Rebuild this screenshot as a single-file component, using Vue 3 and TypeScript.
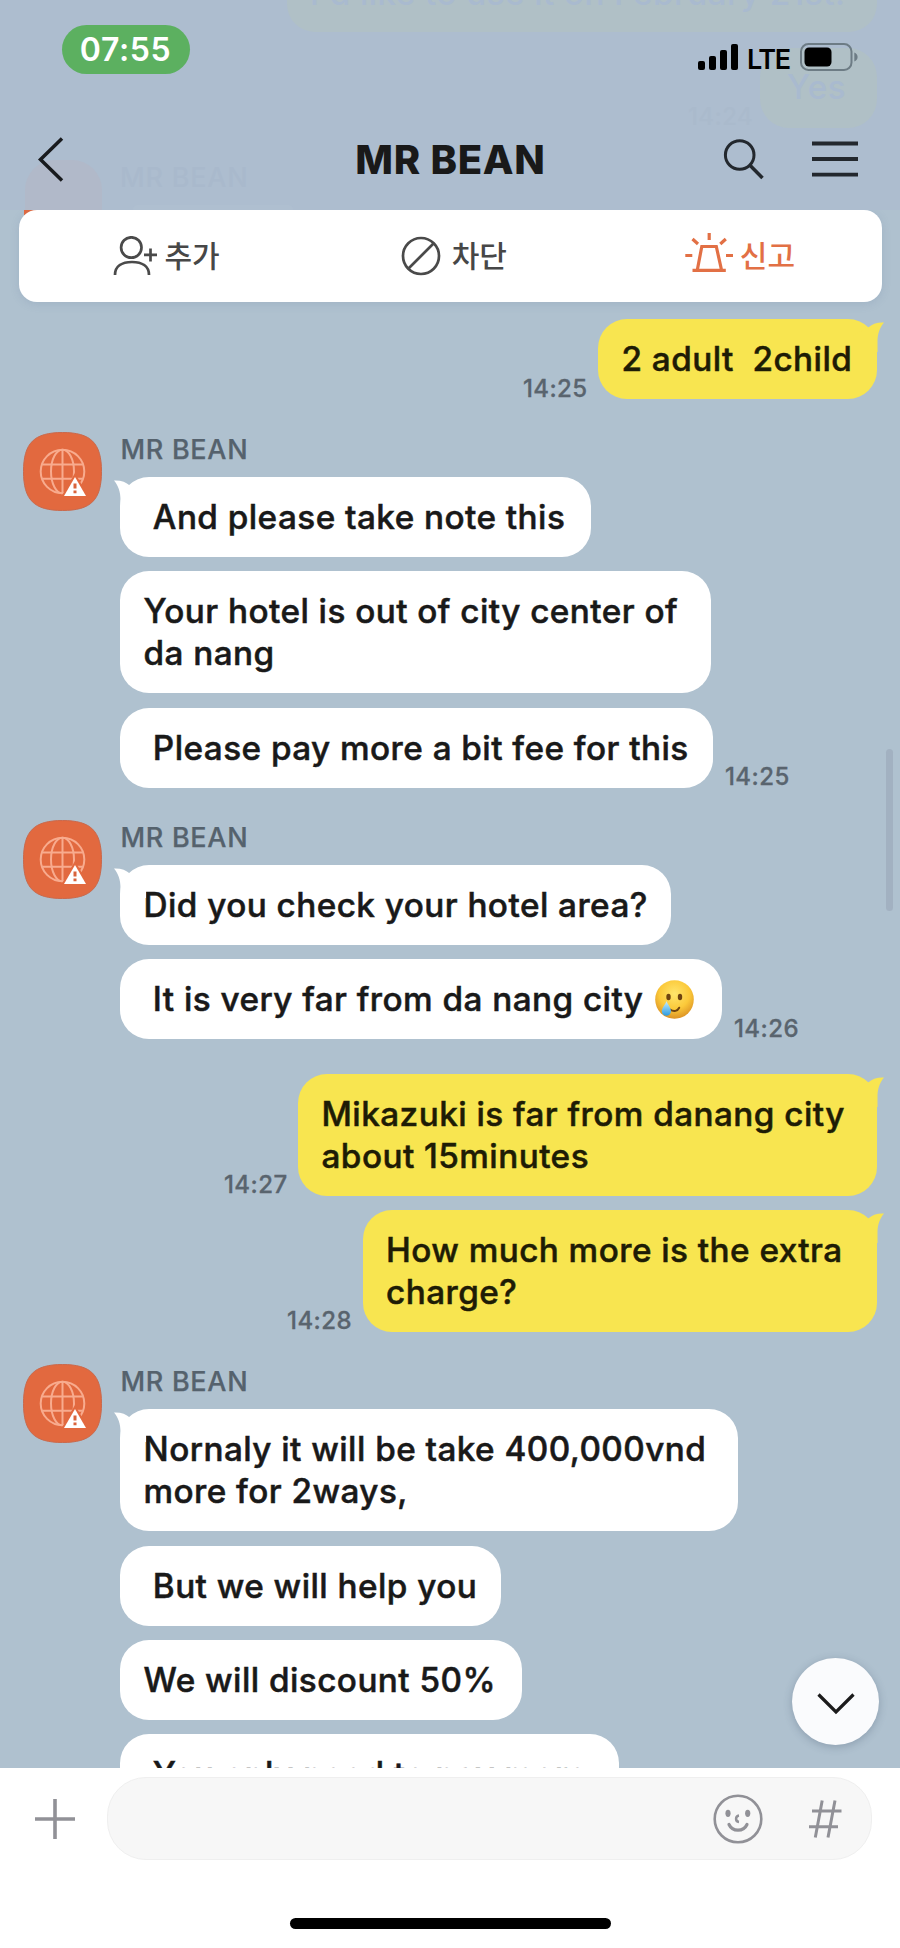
<script setup lang="ts">
interface Message {
  lines: string[]
  width: number
  tail?: boolean
  time?: string
  emoji?: boolean
}
interface Group {
  id: number
  mine: boolean
  gapBefore: number
  messages: Message[]
}

const contact = 'MR BEAN'

const groups: Group[] = [
  {
    id: 1,
    mine: true,
    gapBefore: 17,
    messages: [{ lines: ['2 adult  2child'], width: 279, tail: true, time: '14:25' }],
  },
  {
    id: 2,
    mine: false,
    gapBefore: 33,
    messages: [
      { lines: [' And please take note this'], width: 471, tail: true },
      { lines: ['Your hotel is out of city center of', 'da nang'], width: 590.5 },
      { lines: [' Please pay more a bit fee for this'], width: 593, time: '14:25' },
    ],
  },
  {
    id: 3,
    mine: false,
    gapBefore: 32.4,
    messages: [
      { lines: ['Did you check your hotel area?'], width: 551, tail: true },
      { lines: [' It is very far from da nang city'], width: 602, time: '14:26', emoji: true },
    ],
  },
  {
    id: 4,
    mine: true,
    gapBefore: 34.4,
    messages: [
      { lines: ['Mikazuki is far from danang city', 'about 15minutes'], width: 579, tail: true, time: '14:27' },
      { lines: ['How much more is the extra', 'charge?'], width: 514.5, tail: true, time: '14:28' },
    ],
  },
  {
    id: 5,
    mine: false,
    gapBefore: 32.3,
    messages: [
      { lines: ['Nornaly it will be take 400,000vnd', 'more for 2ways,'], width: 618, tail: true },
      { lines: [' But we will help you'], width: 381 },
      { lines: ['We will discount 50%'], width: 401.5 },
      { lines: [' You only need to pay more'], width: 498.5 },
    ],
  },
]
</script>

<template>
  <div class="phone">
    <header class="top">
      <!-- Conversation showing faintly through the translucent bar -->
      <div class="ghosts" aria-hidden="true">
        <div class="ghost-bubble first"><span>I'd like to use it on February 21st.</span></div>
        <div class="ghost-bubble second"><span>Yes</span></div>
        <span class="ghost-time">14:24</span>
        <span class="ghost-avatar"></span>
        <span class="ghost-name">{{ contact }}</span>
        <span class="ghost-white"></span>
        <span class="avatar-edge"></span>
      </div>

      <div class="status">
        <span class="clock">07:55</span>
        <div class="signals">
          <svg class="bars" width="40" height="26" viewBox="0 0 40 26">
            <rect x="0" y="17" width="7" height="9" rx="2" />
            <rect x="11" y="12" width="7" height="14" rx="2" />
            <rect x="22" y="6" width="7" height="20" rx="2" />
            <rect x="33" y="0" width="7" height="26" rx="2" />
          </svg>
          <span class="lte">LTE</span>
          <svg width="58" height="28" viewBox="0 0 58 28">
            <rect x="1" y="1" width="50.5" height="26" rx="7.5" fill="none" stroke="#6d7c85" stroke-width="2" />
            <rect x="4.5" y="4.5" width="27" height="19" rx="4.5" fill="#000" />
            <path d="M54.3 9.5c2 .8 3.3 2.400 3.300 4.500s-1.300 3.700-3.300 4.500z" fill="#6d7c85" />
          </svg>
        </div>
      </div>

      <nav class="nav">
        <svg width="28" height="46" viewBox="0 0 28 46" class="back">
          <path d="M25 2.500 3.500 23.500 25 44.500" fill="none" stroke="#191b1e" stroke-width="3.500" />
        </svg>
        <h1 class="title">{{ contact }}</h1>
        <div class="nav-icons">
          <svg width="42" height="42" viewBox="0 0 42 42" fill="none" stroke="#23282e">
            <circle cx="16.700" cy="17" r="14.300" stroke-width="3" />
            <path d="M26.700 27 39.500 40" stroke-width="3.500" />
          </svg>
          <svg width="46" height="36" viewBox="0 0 46 36" fill="none" stroke="#23282e" stroke-width="3.800">
            <path d="M0 2.500h46M0 18h46M0 33.700h46" />
          </svg>
        </div>
      </nav>
    </header>

    <section class="actions">
      <button class="action add">
        <svg width="44" height="40" viewBox="0 0 44 40" fill="none" stroke="#4a4a4a" stroke-width="2.700">
          <circle cx="18.300" cy="11.500" r="10.200" />
          <path d="M2 39C2 30 9 26 19 26S36 30 36 39M31 18.800h13M37.500 12.500v13" />
        </svg>
        <span>추가</span>
      </button>
      <button class="action block">
        <svg width="40" height="40" viewBox="0 0 40 40" fill="none" stroke="#4a4a4a" stroke-width="2.700">
          <circle cx="20" cy="20" r="18" />
          <path d="M7.500 32.500 32.500 7.500" />
        </svg>
        <span>차단</span>
      </button>
      <button class="action report">
        <svg width="48" height="40" viewBox="0 0 48 40" fill="none" stroke="#e27045" stroke-width="3.200">
          <path d="M12.500 37 16.800 14.500H31.300L36.300 37M7.500 38.300H40.800" />
          <path d="M24.200 1v7M7.500 7l5.500 5M40.800 7l-5.500 5M.300 23.500h7M41 23.500h7" />
        </svg>
        <span>신고</span>
      </button>
    </section>

    <main class="chat">
      <div
        v-for="g in groups"
        :key="g.id"
        class="group"
        :class="{ mine: g.mine }"
        :style="{ marginTop: g.gapBefore + 'px' }"
      >
        <svg v-if="!g.mine" class="avatar" width="79" height="79" viewBox="0 0 79 79">
          <path
            d="M39.500.500C68 .500 78.500 11 78.500 39.500S68 78.500 39.500 78.500.500 68 .500 39.500 11 .500 39.500.500z"
            fill="#e2693f"
            stroke="#c9694c"
          />
          <g fill="none" stroke="#f8ab8e" stroke-width="2">
            <circle cx="39.500" cy="39.500" r="21.800" />
            <ellipse cx="39.500" cy="39.500" rx="11.500" ry="21.800" />
            <path d="M39.500 17.700v43.600M19.500 32.500h40M19.500 46.800h40" />
          </g>
          <path d="M52 45 63 64H41z" fill="#fff" stroke="#e2693f" stroke-width="4" paint-order="stroke" />
          <path d="M52 51.500v5M52 58.500v2.800" stroke="#d9633b" stroke-width="3" />
        </svg>

        <div class="stack">
          <div v-if="!g.mine" class="name">{{ contact }}</div>
          <div v-for="(m, i) in g.messages" :key="i" class="row">
            <div class="bubble" :style="{ width: m.width + 'px' }">
              <svg v-if="m.tail" class="tail" width="32" height="30" viewBox="0 0 32 30">
                <path d="M0 .500C7 .200 12 2 15.800 5.500L32 14V30H6.500V20C6.500 12 4.500 6 0 .500z" />
              </svg>
              <p v-for="line in m.lines" :key="line" class="line">{{ line }}<svg
                v-if="m.emoji"
                class="emoji"
                width="39"
                height="39"
                viewBox="0 0 39 39"
              >
                <defs>
                  <radialGradient id="face" cx=".5" cy=".35" r=".65">
                    <stop offset="0" stop-color="#ffe56c" />
                    <stop offset=".6" stop-color="#fbc93a" />
                    <stop offset="1" stop-color="#dc9225" />
                  </radialGradient>
                  <linearGradient id="tear" x1="0" y1="0" x2="0" y2="1">
                    <stop offset="0" stop-color="#c9efff" />
                    <stop offset="1" stop-color="#2a9ae0" />
                  </linearGradient>
                </defs>
                <circle cx="19.500" cy="19.500" r="19.300" fill="url(#face)" />
                <ellipse cx="13.500" cy="17" rx="2.200" ry="3.200" fill="#6e4310" />
                <ellipse cx="25" cy="17" rx="2.200" ry="3.200" fill="#6e4310" />
                <path d="M15 29.500c4 2.800 7.500 1.500 9.200-1.800" fill="none" stroke="#6e4310" stroke-width="2" stroke-linecap="round" />
                <path d="M11.500 21c1.500 4 4.500 6.800 4.500 10.200a4.600 4.600 0 0 1-9.200 0c0-3.400 3.400-6.200 4.700-10.200z" fill="url(#tear)" />
              </svg></p>
            </div>
            <time v-if="m.time" class="time">{{ m.time }}</time>
          </div>
        </div>
      </div>

      <div class="scrollbar"></div>
      <button class="jump" aria-label="Jump to latest">
        <svg width="40" height="24" viewBox="0 0 40 24">
          <path d="M2.500 2.500 20 20 37.500 2.500" fill="none" stroke="#1b1b1c" stroke-width="3.200" />
        </svg>
      </button>
    </main>

    <footer class="composer">
      <div class="entry">
        <svg class="plus" width="40" height="40" viewBox="0 0 40 40">
          <path d="M20 0v40M0 20h40" stroke="#919197" stroke-width="3.600" />
        </svg>
        <div class="field">
          <svg width="50" height="50" viewBox="0 0 50 50" fill="none" stroke="#919197">
            <circle cx="25" cy="25" r="23.300" stroke-width="2.600" />
            <g fill="#919197" stroke="none">
              <ellipse cx="15" cy="19.300" rx="2.600" ry="3.600" />
              <ellipse cx="34.700" cy="19.300" rx="2.600" ry="3.600" />
            </g>
            <path d="M26 21.500c-3.800.500-4 6 0 6.500" stroke-width="2.500" />
            <path d="M16 30.500c3.500 7.500 14.500 7.500 18 0" stroke-width="3.200" stroke-linecap="round" />
          </svg>
          <svg width="33" height="38" viewBox="0 0 33 38" fill="none" stroke="#919197" stroke-width="3">
            <path d="M13.200.500 6.300 37.500M26 .500 19 37.500M3 11h29.500M0 26.800h29" />
          </svg>
        </div>
      </div>
      <div class="home"></div>
    </footer>
  </div>
</template>

<style>
body {
  margin: 0;
}
</style>

<style scoped>
.phone {
  width: 900px;
  height: 1948px;
  display: flex;
  flex-direction: column;
  overflow: hidden;
  background: #afc1cf;
  color: #191919;
  font-family: Inter, "Noto Sans CJK KR", sans-serif;
}
h1,
p {
  margin: 0;
}
button {
  border: 0;
  padding: 0;
  background: none;
  font: inherit;
}
svg {
  flex: none;
  display: block;
}

/* Top bar */
.top {
  position: relative;
  height: 210px;
  flex: none;
  background: #adbdcf;
}
.ghosts {
  position: absolute;
  inset: 0;
  font-size: 33.300px;
  font-weight: 500;
  letter-spacing: 0.4px;
  color: #a9bacf;
}
.ghosts > * {
  position: absolute;
}
.ghost-bubble {
  background: #b0c0c6;
  white-space: nowrap;
}
.ghost-bubble.first {
  left: 287px;
  top: 0;
  width: 590px;
  height: 32px;
  border-radius: 0 0 28px 28px;
  overflow: hidden;
}
.ghost-bubble.first span {
  display: block;
  margin: -28px 0 0 23px;
  line-height: 42px;
}
.ghost-bubble.second {
  left: 760px;
  top: 48px;
  width: 117px;
  height: 80px;
  border-radius: 29px;
}
.ghost-bubble.second span {
  display: block;
  margin: 18px 0 0 27px;
  line-height: 42px;
}
.ghost-time {
  left: 688px;
  top: 102px;
  font-size: 24px;
  color: #aabacc;
}
.ghost-avatar {
  left: 25px;
  top: 160px;
  width: 77px;
  height: 50px;
  border-radius: 30px 30px 0 0;
  background: #b1b9c9;
}
.ghost-name {
  left: 120px;
  top: 161px;
  font-size: 27px;
  letter-spacing: 0.8px;
  color: #a9b9cc;
}
.ghost-white {
  left: 133px;
  top: 205px;
  width: 160px;
  height: 5px;
  border-radius: 20px 20px 0 0;
  background: #afbfd0;
}
.avatar-edge {
  left: 24px;
  top: 210px;
  width: 14px;
  height: 6px;
  background: #e2693f;
}
.status {
  position: relative;
  height: 49px;
  padding: 24.500px 42px 0 62px;
  display: flex;
  justify-content: space-between;
}
.clock {
  width: 128px;
  height: 49px;
  border-radius: 25px;
  background: #5cb060;
  color: #fff;
  font-size: 32px;
  font-weight: 600;
  line-height: 50px;
  text-align: center;
  text-indent: -1px;
  letter-spacing: 0.6px;
}
.signals {
  display: flex;
  align-items: flex-start;
  padding-top: 18.500px;
}
.bars {
  margin-top: 1px;
  fill: #000;
}
.lte {
  width: 62px;
  padding-left: 9px;
  box-sizing: border-box;
  color: #000;
  font-size: 27px;
  font-weight: 600;
  line-height: 33px;
  letter-spacing: -1.400px;
}
.nav {
  position: relative;
  margin-top: 44.500px;
  height: 81px;
  display: grid;
  grid-template-columns: 1fr auto 1fr;
  align-items: center;
  padding: 0 42px 0 37px;
}
.title {
  font-size: 40px;
  font-weight: 800;
  line-height: 48px;
  margin: 2px 0 0 6px;
  letter-spacing: 0.7px;
}
.nav-icons {
  display: flex;
  justify-content: flex-end;
  align-items: center;
  gap: 47px;
}

/* Contact actions */
.actions {
  position: relative;
  height: 92px;
  flex: none;
  margin: 0 18.500px;
  border-radius: 18px;
  background: #fff;
  box-shadow: 0 2px 8px rgba(110, 130, 165, 0.22);
  clip-path: inset(0 -12px -20px -12px);
  display: grid;
  grid-template-columns: repeat(3, 1fr);
}
.action {
  display: flex;
  align-items: center;
  gap: 8px;
  color: #474747;
  font-family: "Noto Sans CJK KR", sans-serif;
  font-size: 30px;
  font-weight: 500;
}
.action span {
  line-height: 40px;
  margin-top: -5px;
}
.action.add {
  padding-left: 94px;
}
.action.block {
  padding-left: 95px;
  gap: 10.500px;
}
.action.report {
  padding-left: 91px;
  color: #e27045;
  gap: 7px;
}
.action.report svg {
  margin-top: -9px;
}

/* Conversation */
.chat {
  position: relative;
  height: 1466px;
  flex: none;
  overflow: hidden;
  display: flex;
  flex-direction: column;
}
.group {
  flex: none;
  display: flex;
  padding: 0 23px;
}
.group.mine {
  justify-content: flex-end;
}
.avatar {
  margin-right: 18px;
}
.stack {
  display: flex;
  flex-direction: column;
  gap: 14.300px;
}
.name {
  height: 45px;
  margin-bottom: -14.300px;
  padding-left: 0.500px;
  font-size: 27px;
  font-weight: 500;
  line-height: 35px;
  letter-spacing: 0.700px;
  color: #55626d;
  -webkit-text-stroke: 0.25px #55626d;
}
.row {
  display: flex;
  align-items: flex-end;
  gap: 12px;
}
.mine .row {
  flex-direction: row-reverse;
  gap: 10.500px;
}
.bubble {
  position: relative;
  box-sizing: border-box;
  padding: 19px 0 19px 23.500px;
  border-radius: 29px;
  background: #fff;
}
.mine .bubble {
  background: #f8e550;
  color: #1e1c05;
}
.line {
  height: 42px;
  display: flex;
  align-items: center;
  white-space: pre;
  font-size: 33.300px;
  font-weight: 500;
  line-height: 42px;
  letter-spacing: 0.450px;
  -webkit-text-stroke: 0.5px currentColor;
}
.tail {
  position: absolute;
  left: -6.500px;
  top: 3px;
  fill: #fff;
}
.mine .tail {
  left: auto;
  right: -6.500px;
  transform: scaleX(-1);
  fill: #f8e550;
}
.emoji {
  margin-left: 12px;
}
.time {
  position: relative;
  top: 0.500px;
  font-size: 24px;
  font-weight: 500;
  line-height: 22px;
  letter-spacing: 0.4px;
  color: #59646e;
  -webkit-text-stroke: 0.3px #59646e;
}
.scrollbar {
  position: absolute;
  left: 886px;
  top: 447px;
  width: 7px;
  height: 162px;
  border-radius: 4px;
  background: #a2b1c1;
}
.jump {
  position: absolute;
  left: 792px;
  top: 1356px;
  width: 87px;
  height: 87px;
  border-radius: 50%;
  background: #fafbfd;
  box-shadow: 0 2px 9px rgba(50, 70, 95, 0.28);
  display: flex;
  align-items: center;
  justify-content: center;
}
.jump svg {
  margin-top: 5px;
}

/* Composer */
.composer {
  flex: 1;
  background: #fff;
  display: flex;
  flex-direction: column;
  align-items: center;
}
.entry {
  width: 900px;
  box-sizing: border-box;
  padding: 9px 28px 0 35px;
  display: flex;
  align-items: center;
}
.field {
  margin-left: 31.500px;
  flex: 1;
  height: 83px;
  box-sizing: border-box;
  border: 1.500px solid #efefef;
  border-radius: 39px;
  background: #f7f7f7;
  display: flex;
  align-items: center;
  justify-content: flex-end;
  gap: 46px;
  padding-right: 29px;
}
.home {
  width: 321px;
  height: 11px;
  margin-top: 58px;
  border-radius: 6px;
  background: #000;
}
</style>
